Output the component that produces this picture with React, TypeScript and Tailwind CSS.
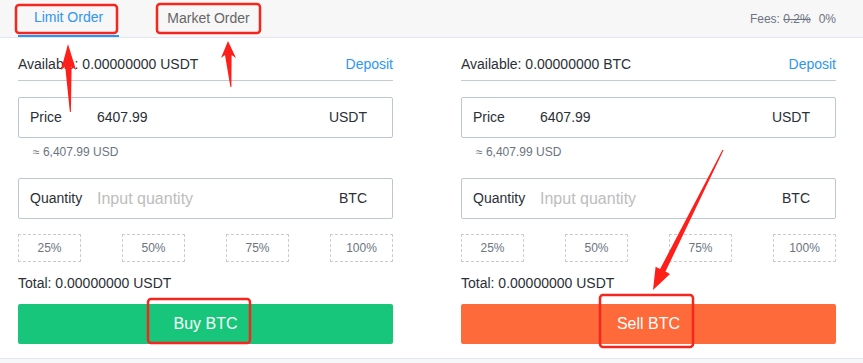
import React from 'react'

const font = { fontFamily: '"Liberation Sans", Arial, sans-serif' }

const OrderPanel = ({ side }: { side: 'buy' | 'sell' }) => {
  const isBuy = side === 'buy'
  return (
    <div className="flex-1 flex flex-col">
      {/* Available */}
      <div className="flex items-center justify-between pt-[17px] pb-[7px] border-b border-[#c3ccd5] text-[14px] leading-[18px]">
        <span className="text-[#2b2f36]">
          Available: 0.00000000 {isBuy ? 'USDT' : 'BTC'}
        </span>
        <span className="text-[#2e96f3]">Deposit</span>
      </div>

      {/* Price */}
      <div className="mt-[16px] h-[41px] flex items-center border border-[#bcc7d1] rounded-[2px] pl-[11px] pr-[25px] text-[14px] text-[#2b2f36]">
        <span className="w-[67px]">Price</span>
        <span className="flex-1">6407.99</span>
        <span>USDT</span>
      </div>
      <div className="mt-[6px] h-[16px] pl-[15px] text-[12px] leading-[16px] text-[#6b7480]">≈ 6,407.99 USD</div>

      {/* Quantity */}
      <div className="mt-[18px] h-[41px] flex items-center border border-[#bcc7d1] rounded-[2px] pl-[11px] pr-[25px] text-[14px] text-[#2b2f36]">
        <span className="w-[67px]">Quantity</span>
        <span className="flex-1 text-[16px] text-[#bdbdbd]">Input quantity</span>
        <span>BTC</span>
      </div>

      {/* Percent */}
      <div className="mt-[15px] flex justify-between">
        {['25%', '50%', '75%', '100%'].map((p) => (
          <div
            key={p}
            className="w-[63px] h-[28px] flex items-center justify-center border border-dashed border-[#c6ccd3] text-[12px] text-[#6b7480]"
          >
            {p}
          </div>
        ))}
      </div>

      <div className="mt-[12px] text-[14px] leading-[18px] text-[#2b2f36]">Total: 0.00000000 USDT</div>

      <div
        className={`mt-[12px] h-[40px] rounded-[2px] flex items-center justify-center text-white text-[16px] ${
          isBuy ? 'bg-[#17c67a]' : 'bg-[#ff6a3a]'
        }`}
      >
        {isBuy ? 'Buy BTC' : 'Sell BTC'}
      </div>
    </div>
  )
}

export default function App() {
  return (
    <div className="relative w-[863px] h-[363px] bg-[#f6f7f9] overflow-hidden" style={font}>
      {/* Tabs */}
      <div className="h-[38px] flex items-stretch bg-[#f7f7f7] border-b border-[#e2e7ed] pl-[18px] pr-[27px]">
        <div className="w-[101px] flex items-center justify-center border-b-2 border-[#2196f3] text-[14px] text-[#2e96f3]">
          Limit Order
        </div>
        <div className="ml-[32px] w-[115px] flex items-center justify-center text-[14px] text-[#666]">
          Market Order
        </div>
        <div className="ml-auto flex items-center text-[12px] text-[#6b7480]">
          Fees:&nbsp;<span className="line-through">0.2%</span>
          <span className="ml-[8px]">0%</span>
        </div>
      </div>

      {/* Panels */}
      <div className="bg-white flex gap-[68px] pl-[18px] pr-[27px] pb-[14px] border-b border-[#e2e7ed]">
        <OrderPanel side="buy" />
        <OrderPanel side="sell" />
      </div>

      {/* Annotations */}
      <svg className="absolute inset-0 pointer-events-none" width="863" height="363">
        <g fill="none" stroke="#f4261d" strokeWidth="2.5">
          <rect x="16" y="5" width="101" height="28" rx="3" />
          <rect x="157" y="4" width="103" height="29" rx="3" />
          <rect x="148" y="299" width="102" height="44" rx="3" />
          <rect x="600" y="295" width="93" height="52" rx="3" />
        </g>
        <g fill="#ff1f1a">
          <polygon points="68,44 76,70 71.6,66.5 70.9,112 69.9,112 65.2,66.5 61,70" />
          <polygon points="228,41 236,58 231.6,55 231.4,87 230.4,87 225,55 221,58" />
          <polygon points="653,290 670,274 665.5,271.6 723.5,150.3 722.5,149.7 660.1,269 655.6,266.7" />
        </g>
      </svg>
    </div>
  )
}
